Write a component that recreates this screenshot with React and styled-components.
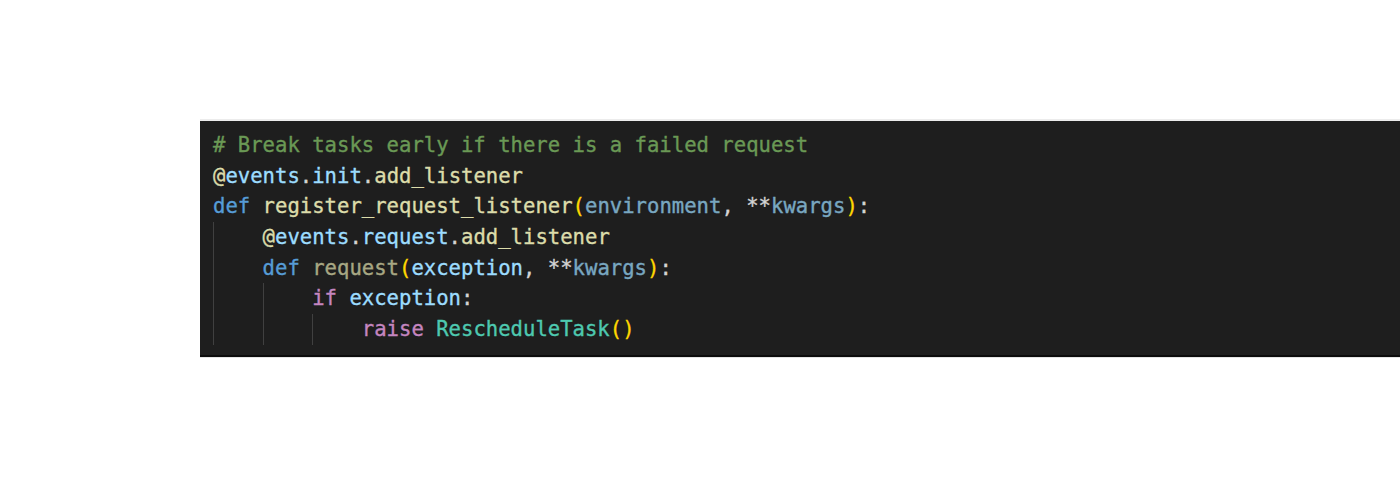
import React from 'react';
import styled, { createGlobalStyle } from 'styled-components';

const colors = {
  bg: '#1e1e1e',
  comment: '#6a9955',
  keyword: '#569cd6',
  control: '#c586c0',
  func: '#dcdcaa',
  variable: '#9cdcfe',
  cls: '#4ec9b0',
  bracket: '#ffd700',
  plain: '#d4d4d4',
  guide: '#404040',
};

const GlobalStyle = createGlobalStyle`
  body {
    margin: 0;
    background: #ffffff;
  }
`;

// each line: [indentLevel, [[kind, text, faded?], ...]]
const LINES = [
  [0, [['comment', '# Break tasks early if there is a failed request']]],
  [
    0,
    [
      ['func', '@'],
      ['variable', 'events'],
      ['plain', '.'],
      ['variable', 'init'],
      ['plain', '.'],
      ['func', 'add_listener'],
    ],
  ],
  [
    0,
    [
      ['keyword', 'def'],
      ['plain', ' '],
      ['func', 'register_request_listener'],
      ['bracket', '('],
      ['variable', 'environment', true],
      ['plain', ', **'],
      ['variable', 'kwargs', true],
      ['bracket', ')'],
      ['plain', ':'],
    ],
  ],
  [
    1,
    [
      ['func', '@'],
      ['variable', 'events'],
      ['plain', '.'],
      ['variable', 'request'],
      ['plain', '.'],
      ['func', 'add_listener'],
    ],
  ],
  [
    1,
    [
      ['keyword', 'def'],
      ['plain', ' '],
      ['func', 'request', true],
      ['bracket', '('],
      ['variable', 'exception'],
      ['plain', ', **'],
      ['variable', 'kwargs', true],
      ['bracket', ')'],
      ['plain', ':'],
    ],
  ],
  [
    2,
    [
      ['control', 'if'],
      ['plain', ' '],
      ['variable', 'exception'],
      ['plain', ':'],
    ],
  ],
  [
    3,
    [
      ['control', 'raise'],
      ['plain', ' '],
      ['cls', 'RescheduleTask'],
      ['bracket', '()'],
    ],
  ],
];

function CodeLine({ indent, tokens }) {
  return (
    <Line>
      {Array.from({ length: indent }).map((_, i) => (
        <Indent key={i} />
      ))}
      {tokens.map(([kind, text, faded], i) => (
        <Token key={i} $kind={kind} $faded={faded}>
          {text}
        </Token>
      ))}
    </Line>
  );
}

export default function App() {
  return (
    <>
      <GlobalStyle />
      <Page>
        <CodeBlock>
          {LINES.map(([indent, tokens], i) => (
            <CodeLine key={i} indent={indent} tokens={tokens} />
          ))}
        </CodeBlock>
      </Page>
    </>
  );
}

const Page = styled.div`
  width: 1400px;
  height: 480px;
  padding: 119px 0 0 200px;
  box-sizing: border-box;
  overflow: hidden;
`;

const CodeBlock = styled.pre`
  margin: 0;
  width: 1200px;
  box-sizing: border-box;
  padding: 9px 0 10px 13px;
  background: ${colors.bg};
  border-top: 2px solid #ececec;
  border-bottom: 2px solid #0c0c0c;
  box-shadow: 0 1px 0 #e4e4e4;
  font-family: 'DejaVu Sans Mono', 'Liberation Mono', monospace;
  font-size: 20.6px;
  line-height: 30.7px;
  color: ${colors.plain};
  -webkit-text-stroke: 0.35px currentColor;
`;

const Line = styled.div`
  height: 30.7px;
  white-space: pre;
`;

const Indent = styled.span`
  display: inline-block;
  box-sizing: border-box;
  width: 4ch;
  height: 30.7px;
  vertical-align: top;
  border-left: 1px solid ${colors.guide};
`;

const Token = styled.span`
  color: ${({ $kind }) => colors[$kind]};
  opacity: ${({ $faded }) => ($faded ? 0.72 : 1)};
  -webkit-text-stroke: 0.35px ${({ $kind }) => colors[$kind]};
`;
